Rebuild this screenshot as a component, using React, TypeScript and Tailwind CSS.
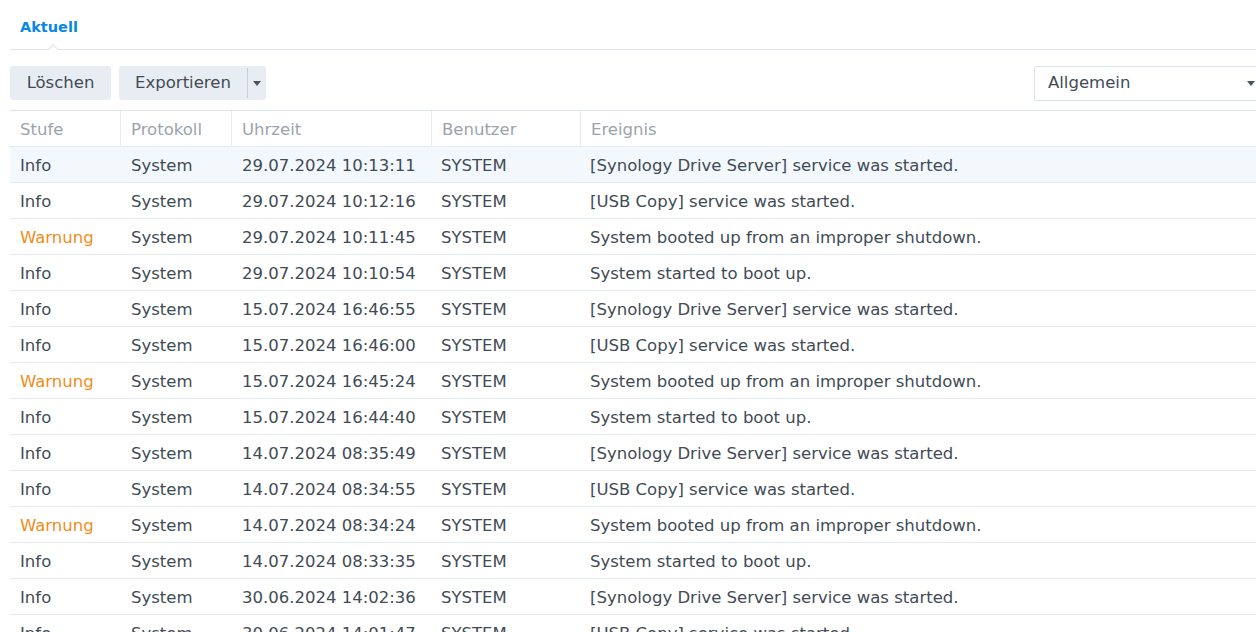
import React from 'react';

type Row = { level: 'Info' | 'Warnung'; time: string; event: string };

const rows: Row[] = [
  { level: 'Info', time: '29.07.2024 10:13:11', event: '[Synology Drive Server] service was started.' },
  { level: 'Info', time: '29.07.2024 10:12:16', event: '[USB Copy] service was started.' },
  { level: 'Warnung', time: '29.07.2024 10:11:45', event: 'System booted up from an improper shutdown.' },
  { level: 'Info', time: '29.07.2024 10:10:54', event: 'System started to boot up.' },
  { level: 'Info', time: '15.07.2024 16:46:55', event: '[Synology Drive Server] service was started.' },
  { level: 'Info', time: '15.07.2024 16:46:00', event: '[USB Copy] service was started.' },
  { level: 'Warnung', time: '15.07.2024 16:45:24', event: 'System booted up from an improper shutdown.' },
  { level: 'Info', time: '15.07.2024 16:44:40', event: 'System started to boot up.' },
  { level: 'Info', time: '14.07.2024 08:35:49', event: '[Synology Drive Server] service was started.' },
  { level: 'Info', time: '14.07.2024 08:34:55', event: '[USB Copy] service was started.' },
  { level: 'Warnung', time: '14.07.2024 08:34:24', event: 'System booted up from an improper shutdown.' },
  { level: 'Info', time: '14.07.2024 08:33:35', event: 'System started to boot up.' },
  { level: 'Info', time: '30.06.2024 14:02:36', event: '[Synology Drive Server] service was started.' },
  { level: 'Info', time: '30.06.2024 14:01:47', event: '[USB Copy] service was started.' },
];

const Caret = () => (
  <svg width="8" height="5" viewBox="0 0 8 5" className="fill-[#4a5460]">
    <path d="M0 0h8L4 5z" />
  </svg>
);

const App: React.FC = () => {
  return (
    <div className="h-[632px] w-[1256px] overflow-hidden bg-white font-['DejaVu_Sans',Verdana,sans-serif] text-[16.5px] text-[#414b55]">
      {/* Tabs */}
      <div className="relative ml-[10px] flex h-[50px] items-end border-b border-[#dde3ea]">
        <div className="mb-[10px] ml-[10px] text-[14.5px] font-bold text-[#0a86e6]">Aktuell</div>
        <div className="absolute bottom-[-1px] left-[36px] h-[7px] w-[14px] overflow-hidden">
          <div className="mx-auto mt-[3px] h-[10px] w-[10px] rotate-45 border-l border-t border-[#dde3ea] bg-white" />
        </div>
      </div>

      {/* Toolbar */}
      <div className="flex h-[60px] items-center justify-between pl-[10px] pt-[6px]">
        <div className="flex gap-[8px]">
          <button className="h-[34px] w-[101px] rounded-[3px] bg-[#e8edf3] pt-[1px] text-[#414b55]">Löschen</button>
          <div className="flex h-[34px] rounded-[3px] bg-[#e8edf3]">
            <button className="w-[128px] pt-[1px] text-[#414b55]">Exportieren</button>
            <div className="my-[2px] w-px bg-[#c6ced8]" />
            <button className="flex w-[18px] items-center justify-center">
              <Caret />
            </button>
          </div>
        </div>
        <div className="-mr-[4px] flex h-[35px] w-[226px] items-center justify-between rounded-[3px] border border-[#dbe2ea] pl-[13px] pr-[4px] pt-[1px]">
          <span>Allgemein</span>
          <Caret />
        </div>
      </div>

      {/* Table */}
      <div className="ml-[10px] border-t border-[#dde3ea]">
        <div className="flex h-[36px] items-center border-b border-[#e6ebf1] text-[#9ba3ac]">
          <div className="flex h-full w-[111px] items-center border-r border-[#e6ebf1] pl-[10px] pt-[4px]">Stufe</div>
          <div className="flex h-full w-[111px] items-center border-r border-[#e6ebf1] pl-[10px] pt-[4px]">Protokoll</div>
          <div className="flex h-full w-[200px] items-center border-r border-[#e6ebf1] pl-[10px] pt-[4px]">Uhrzeit</div>
          <div className="flex h-full w-[149px] items-center border-r border-[#e6ebf1] pl-[10px] pt-[4px]">Benutzer</div>
          <div className="flex h-full flex-1 items-center pl-[10px] pt-[4px]">Ereignis</div>
        </div>
        {rows.map((r, i) => (
          <div
            key={i}
            className={`flex h-[36px] items-center border-b border-[#e6ebf1] pt-[4px] ${i === 0 ? 'bg-[#f3f8fd]' : ''}`}
          >
            <div className={`w-[111px] pl-[10px] ${r.level === 'Warnung' ? 'text-[#f28c1a]' : ''}`}>{r.level}</div>
            <div className="w-[111px] pl-[10px]">System</div>
            <div className="w-[200px] pl-[10px]">{r.time}</div>
            <div className="w-[149px] pl-[9px]">SYSTEM</div>
            <div className="flex-1 pl-[9px]">{r.event}</div>
          </div>
        ))}
      </div>
    </div>
  );
};

export default App;
